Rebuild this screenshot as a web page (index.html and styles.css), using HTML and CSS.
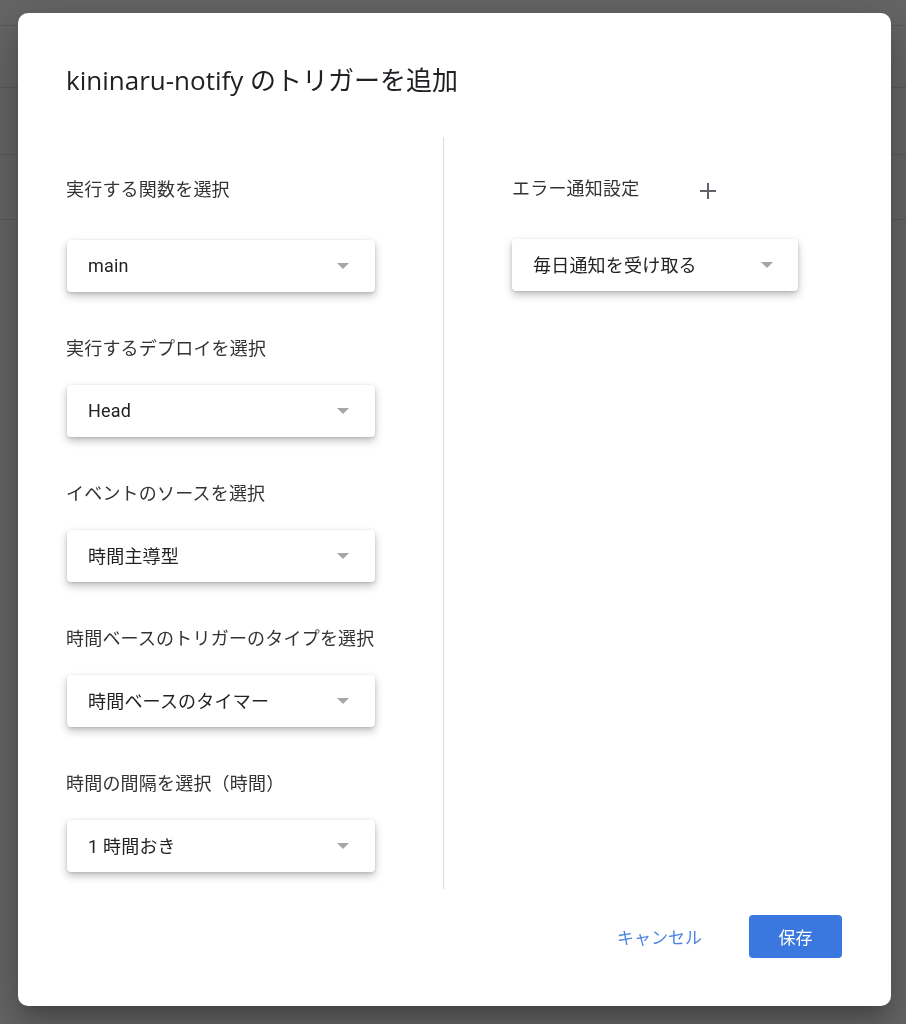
FILE: index.html
```html
<!DOCTYPE html>
<html lang="ja">
<head>
<meta charset="utf-8">
<title>トリガーを追加</title>
<link rel="stylesheet" href="styles.css">
</head>
<body>
<div class="backdrop">
  <div class="bg-row r1"></div>
  <div class="bg-row r2"></div>
  <div class="bg-row r3"></div>
  <div class="bg-row r4"></div>
</div>
<div class="dialog">
  <h1 class="title">kininaru-notify のトリガーを追加</h1>
  <div class="body">
    <div class="col left">
      <div class="field first">
        <div class="label">実行する関数を選択</div>
        <div class="select"><span>main</span><i class="arrow"></i></div>
      </div>
      <div class="field">
        <div class="label">実行するデプロイを選択</div>
        <div class="select"><span>Head</span><i class="arrow"></i></div>
      </div>
      <div class="field">
        <div class="label">イベントのソースを選択</div>
        <div class="select"><span>時間主導型</span><i class="arrow"></i></div>
      </div>
      <div class="field">
        <div class="label">時間ベースのトリガーのタイプを選択</div>
        <div class="select"><span>時間ベースのタイマー</span><i class="arrow"></i></div>
      </div>
      <div class="field">
        <div class="label">時間の間隔を選択（時間）</div>
        <div class="select"><span>1 時間おき</span><i class="arrow"></i></div>
      </div>
    </div>
    <div class="col right">
      <div class="field first">
        <div class="label-row">
          <div class="label">エラー通知設定</div>
          <svg class="plus" width="18" height="18" viewBox="0 0 18 18"><path d="M9 1v16M1 9h16" stroke="#5f6368" stroke-width="2" fill="none"/></svg>
        </div>
        <div class="select narrow"><span>毎日通知を受け取る</span><i class="arrow"></i></div>
      </div>
    </div>
  </div>
  <div class="actions">
    <button class="btn cancel">キャンセル</button>
    <button class="btn save">保存</button>
  </div>
</div>
</body>
</html>
```
FILE: styles.css
```css
html, body {
  margin: 0;
  padding: 0;
  height: 100%;
}
body {
  background: #656565;
  font-family: Roboto, "Noto Sans CJK JP", sans-serif;
  overflow: hidden;
}
.backdrop {
  display: flex;
  flex-direction: column;
}
.bg-row {
  border-bottom: 1px solid #595959;
}
.r1 { height: 25px; }
.r2 { height: 61px; }
.r3 { height: 66px; }
.r4 { height: 64px; }

.dialog {
  position: fixed;
  left: 18px;
  top: 13px;
  width: 873px;
  height: 993px;
  box-sizing: border-box;
  background: #fff;
  border-radius: 10px;
  padding: 51px 49px 48px 48px;
  display: flex;
  flex-direction: column;
  box-shadow: 0 24px 38px 3px rgba(0,0,0,.14), 0 9px 46px 8px rgba(0,0,0,.12), 0 11px 15px -7px rgba(0,0,0,.2);
}
.title {
  margin: 0;
  font-family: "Open Sans", "Noto Sans CJK JP", sans-serif;
  font-weight: 400;
  font-size: 26px;
  line-height: 32px;
  color: #202124;
}
.body {
  margin-top: 41px;
  height: 752px;
  display: flex;
}
.col.left {
  width: 378px;
  border-right: 1px solid #dadada;
  box-sizing: border-box;
  padding-top: 41px;
}
.col.right {
  padding-left: 68px;
  padding-top: 40px;
}
.field {
  display: flex;
  flex-direction: column;
}
.field + .field {
  margin-top: 45px;
}
.label {
  font-size: 18px;
  letter-spacing: 0.2px;
  line-height: 24px;
  color: #333;
  height: 24px;
}
.label-row {
  display: flex;
  align-items: center;
  height: 24px;
}
.plus {
  margin-left: 60px;
  margin-top: 4px;
}
.select {
  margin-top: 24px;
  margin-left: 1px;
  width: 308px;
  height: 52px;
  box-sizing: border-box;
  padding: 0 26px 2px 21px;
  display: flex;
  align-items: center;
  justify-content: space-between;
  border-radius: 4px;
  background: #fff;
  box-shadow: 0 4px 8px rgba(0,0,0,.24), 0 1px 3px rgba(0,0,0,.14);
  font-size: 18px;
  letter-spacing: 0.2px;
  color: #222;
}
.first .select {
  margin-top: 38px;
}
.select.narrow {
  margin-left: 0;
  width: 286px;
  padding-right: 25px;
}
.arrow {
  width: 0;
  height: 0;
  margin-top: 2px;
  border-left: 6.5px solid transparent;
  border-right: 6.5px solid transparent;
  border-top: 6.5px solid #a6a6a6;
}
.actions {
  margin-top: 26px;
  display: flex;
  justify-content: flex-end;
  align-items: center;
}
.btn {
  font-family: Roboto, "Noto Sans CJK JP", sans-serif;
  font-size: 17px;
  border: none;
  background: none;
  height: 43px;
  border-radius: 4px;
  padding: 0;
  cursor: pointer;
}
.cancel {
  color: #4a84e4;
  padding: 0 16px;
  margin-right: 31px;
}
.save {
  background: #3a78df;
  color: #fff;
  width: 93px;
}
```
